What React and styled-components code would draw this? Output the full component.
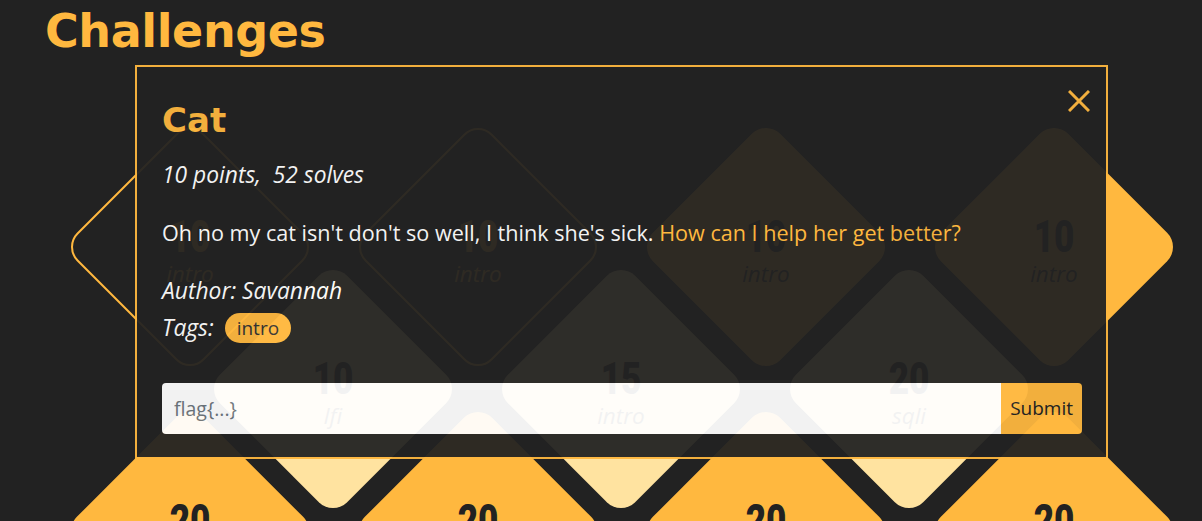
import React from "react";
import styled, { createGlobalStyle, css } from "styled-components";

const orange = "#ffb83f";
const pale = "#ffe3a0";
const dark = "#222222";

const GlobalStyle = createGlobalStyle`
  html, body {
    margin: 0;
    padding: 0;
    background: ${dark};
  }
  body {
    font-family: "Open Sans", sans-serif;
    overflow: hidden;
  }
`;

const Page = styled.div`
  position: relative;
  width: 1202px;
  height: 521px;
  padding-left: 45px;
  box-sizing: border-box;
  overflow: hidden;
`;

const Title = styled.h1`
  margin: 4px 0 0;
  font-family: "DejaVu Sans", sans-serif;
  font-weight: 700;
  font-size: 46px;
  line-height: 55px;
  letter-spacing: -0.4px;
  color: ${orange};
`;

const Board = styled.div`
  display: flex;
  flex-direction: column;
  margin: 68px 0 0 25px;
`;

const Row = styled.div`
  display: flex;
  gap: 48px;
  padding-left: ${(p) => (p.$offset ? "143px" : "0")};
  & + & {
    margin-top: -98px;
  }
`;

const Tile = styled.div`
  display: grid;
  place-items: center;
  width: 240px;
  height: 240px;
  flex-shrink: 0;
`;

const shapes = {
  outline: css`
    background: transparent;
    border: 2px solid ${orange};
  `,
  filled: css`
    background: ${orange};
  `,
  pale: css`
    background: ${pale};
  `,
};

const Shape = styled.div`
  grid-area: 1 / 1;
  width: 180px;
  height: 180px;
  box-sizing: border-box;
  border-radius: 20px;
  transform: rotate(45deg);
  ${(p) => shapes[p.$kind]}
`;

const TileText = styled.div`
  grid-area: 1 / 1;
  position: relative;
  display: flex;
  flex-direction: column;
  align-items: center;
  padding-top: 10px;
  color: ${(p) => (p.$kind === "outline" ? orange : dark)};
`;

const Points = styled.span`
  display: inline-block;
  font-family: Roboto, "Liberation Sans", sans-serif;
  font-weight: 900;
  font-size: 45px;
  line-height: 44px;
  transform: scaleX(0.78);
`;

const Category = styled.span`
  font-style: italic;
  font-size: 22.5px;
  line-height: 30px;
`;

const Modal = styled.div`
  position: absolute;
  top: 65px;
  left: 135px;
  width: 973px;
  box-sizing: border-box;
  padding: 33px 24px 23px 25px;
  background: ${dark};
  border: 2px solid ${orange};
  opacity: 0.94;
  color: #fff;
  font-size: 21.6px;
  line-height: 32.4px;
`;

const ModalTitle = styled.h2`
  margin: 0;
  font-family: "DejaVu Sans", sans-serif;
  font-weight: 700;
  font-size: 34px;
  line-height: 40px;
  color: ${orange};
`;

const CloseButton = styled.button`
  position: absolute;
  top: 23px;
  right: 16px;
  width: 22px;
  height: 22px;
  padding: 0;
  border: none;
  background: none;
  display: flex;
`;

const Meta = styled.p`
  margin: ${(p) => p.$top}px 0 0;
  font-style: ${(p) => (p.$italic ? "italic" : "normal")};
  font-size: ${(p) => (p.$italic ? "22.8px" : "inherit")};
`;

const Link = styled.a`
  color: ${orange};
  text-decoration: none;
`;

const TagsRow = styled.div`
  display: flex;
  align-items: center;
  gap: 11px;
  margin-top: 5px;
  font-style: italic;
  font-size: 22.8px;
`;

const Pill = styled.span`
  font-style: normal;
  font-size: 19px;
  line-height: 30px;
  padding: 0 12px;
  border-radius: 15px;
  background: ${orange};
  color: #333;
`;

const FlagForm = styled.form`
  display: flex;
  height: 51px;
  margin-top: 38px;
`;

const FlagInput = styled.input`
  flex: 1;
  min-width: 0;
  border: none;
  outline: none;
  border-radius: 4px 0 0 4px;
  padding: 0 12px;
  background: #fff;
  font-family: "Open Sans", sans-serif;
  font-size: 19.5px;
  color: #333;
  &::placeholder {
    color: #6c757d;
  }
`;

const SubmitButton = styled.button`
  border: none;
  border-radius: 0 4px 4px 0;
  padding: 0 9px;
  background: ${orange};
  font-family: "Open Sans", sans-serif;
  font-size: 19px;
  color: ${dark};
`;

const rows = [
  [
    { points: 10, cat: "intro", kind: "outline" },
    { points: 10, cat: "intro", kind: "outline" },
    { points: 10, cat: "intro", kind: "filled" },
    { points: 10, cat: "intro", kind: "filled" },
  ],
  [
    { points: 10, cat: "lfi", kind: "pale" },
    { points: 15, cat: "intro", kind: "pale" },
    { points: 20, cat: "sqli", kind: "pale" },
  ],
  [
    { points: 20, cat: "web", kind: "filled" },
    { points: 20, cat: "crypto", kind: "filled" },
    { points: 20, cat: "web", kind: "filled" },
    { points: 20, cat: "pwn", kind: "filled" },
  ],
];

const Diamond = ({ points, cat, kind }) => (
  <Tile>
    <Shape $kind={kind} />
    <TileText $kind={kind}>
      <Points>{points}</Points>
      <Category>{cat}</Category>
    </TileText>
  </Tile>
);

export default function App() {
  return (
    <>
      <GlobalStyle />
      <Page>
        <Title>Challenges</Title>
        <Board>
          {rows.map((row, i) => (
            <Row key={i} $offset={i % 2 === 1}>
              {row.map((c, j) => (
                <Diamond key={j} {...c} />
              ))}
            </Row>
          ))}
        </Board>

        <Modal>
          <ModalTitle>Cat</ModalTitle>
          <CloseButton type="button" aria-label="Close">
            <svg width="22" height="22" viewBox="0 0 22 22">
              <path d="M1 1L21 21M21 1L1 21" stroke={orange} strokeWidth="3" fill="none" />
            </svg>
          </CloseButton>
          <Meta $top={19} $italic>
            10 points,&nbsp; 52 solves
          </Meta>
          <Meta $top={26}>
            Oh no my cat isn't don't so well, I think she's sick.{" "}
            <Link href="#">How can I help her get better?</Link>
          </Meta>
          <Meta $top={25} $italic>
            Author: Savannah
          </Meta>
          <TagsRow>
            Tags:
            <Pill>intro</Pill>
          </TagsRow>
          <FlagForm onSubmit={(e) => e.preventDefault()}>
            <FlagInput placeholder="flag{...}" />
            <SubmitButton type="submit">Submit</SubmitButton>
          </FlagForm>
        </Modal>
      </Page>
    </>
  );
}
